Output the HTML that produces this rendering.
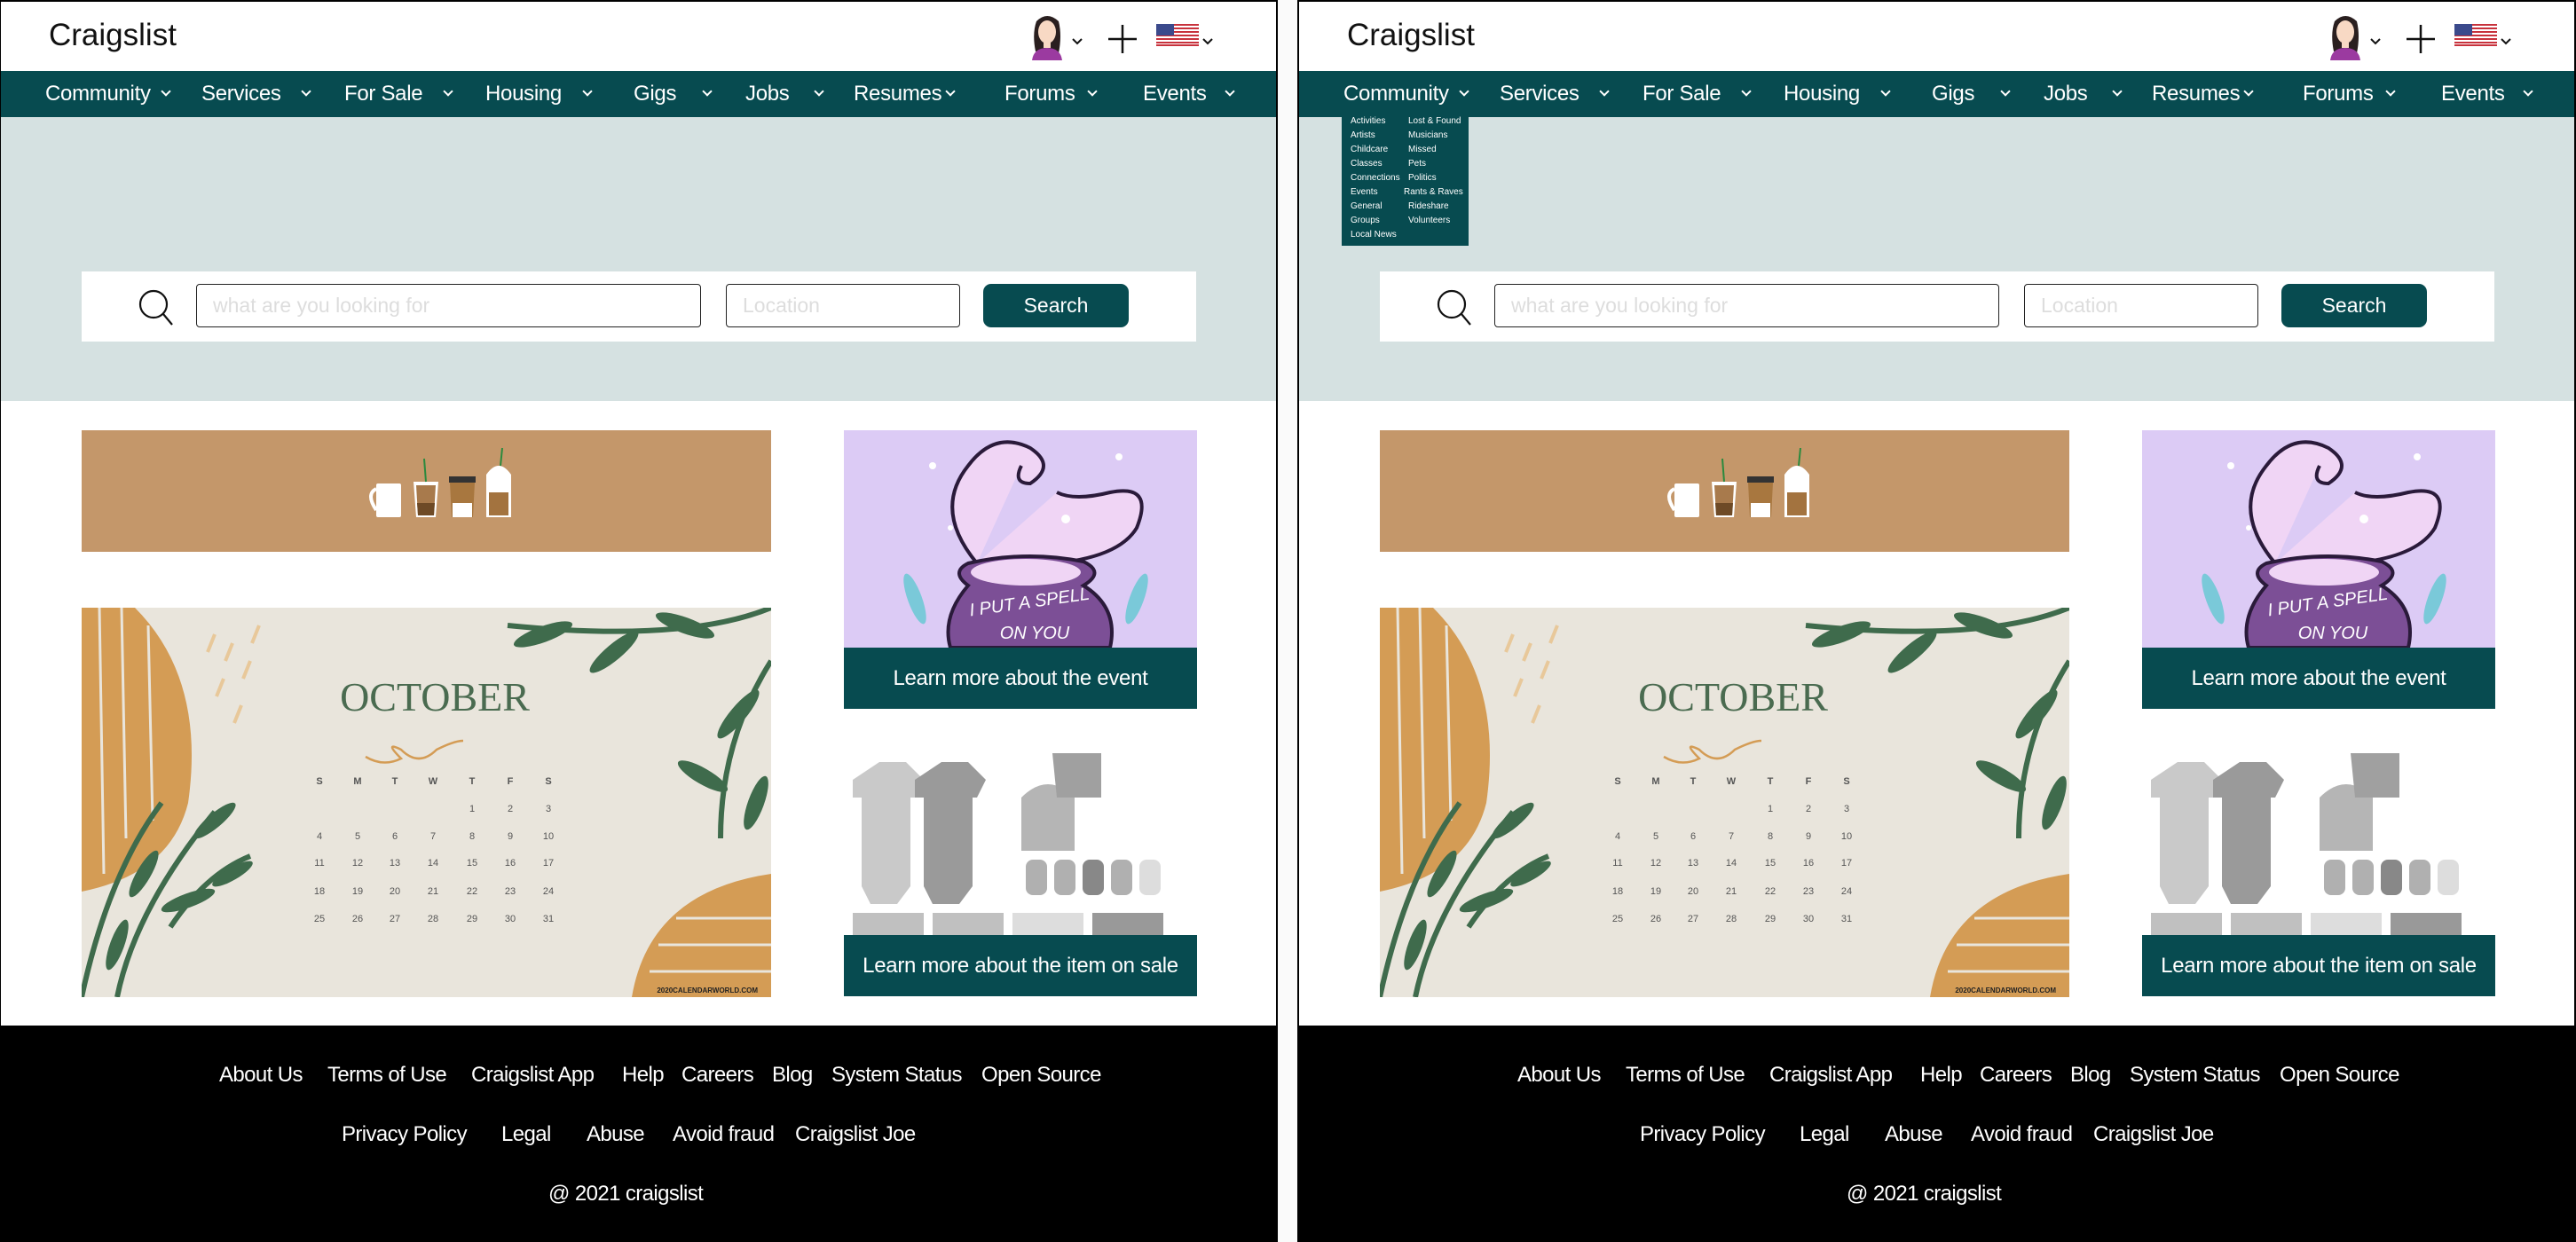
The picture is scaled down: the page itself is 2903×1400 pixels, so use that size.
<!DOCTYPE html>
<html><head><meta charset="utf-8"><style>
*{margin:0;padding:0;box-sizing:border-box}
body{width:2903px;height:1400px;background:#fafafa;position:relative;overflow:hidden;font-family:"Liberation Sans",sans-serif}
.f{position:absolute;top:0;width:1441px;height:1400px;border:2px solid #000;background:#fff;overflow:hidden}
.a{position:absolute}
.logo{left:54px;top:18px;font-size:35px;color:#111}
.nav{left:0;top:78px;width:100%;height:52px;background:#074b50}
.nav span{position:absolute;top:12px;color:#fff;font-size:24px;letter-spacing:-0.3px}
.chev{position:absolute;width:8px;height:8px;border-right:2px solid #fff;border-bottom:2px solid #fff;transform:rotate(45deg);top:19px}
.hero{left:0;top:130px;width:100%;height:320px;background:#d5e1e1}
.panel{left:91px;top:304px;width:1256px;height:79px;background:#fff}
.inp{position:absolute;border:1.5px solid #222;border-radius:4px;background:#fff;color:#ddd;font-size:23px;padding:10px 0 0 18px}
.btn{position:absolute;left:1016px;top:14px;width:164px;height:49px;background:#074b50;border-radius:9px;color:#fff;font-size:23px;text-align:center;line-height:49px}
.cap{position:absolute;left:950px;width:398px;height:69px;background:#074b50;color:#fff;font-size:24px;text-align:center;line-height:69px;letter-spacing:-0.3px}
.foot{left:0;top:1154px;width:100%;height:246px;background:#000}
.foot span{position:absolute;color:#fff;font-size:24px;letter-spacing:-0.6px}
.dd{left:48px;top:128px;width:143px;height:147px;background:#074b50}
.dd span{position:absolute;color:#fff;font-size:10px}
.cal span{position:absolute;font-size:11px;color:#555;width:20px;text-align:center}
</style></head><body>

<!-- LEFT FRAME -->
<div class="f" style="left:-1px">
<div class="a logo">Craigslist</div>
<svg class="a" style="left:1158px;top:12px" width="215" height="54" viewBox="0 0 215 54">
<path d="M8 44 Q4 24 9 10 Q21 -2 34 10 Q38 26 34 46 Z" fill="#2a1f1f"/>
<ellipse cx="21" cy="22" rx="10" ry="13" fill="#f8d9c4"/>
<rect x="17" y="32" width="8" height="8" fill="#f8d9c4"/>
<path d="M4 54 Q6 40 21 40 Q36 40 38 54Z" fill="#9b3aa0"/>
<path d="M50 30 l5 5 l5 -5" stroke="#111" stroke-width="2" fill="none"/>
<path d="M106 14 V46 M90 30 H122" stroke="#111" stroke-width="2.5"/>
<g><rect x="144" y="13" width="48" height="25" fill="#fff"/>
<rect x="144" y="13" width="48" height="2" fill="#c8323c"/><rect x="144" y="17" width="48" height="2" fill="#c8323c"/><rect x="144" y="21" width="48" height="2" fill="#c8323c"/><rect x="144" y="25" width="48" height="2" fill="#c8323c"/><rect x="144" y="29" width="48" height="2" fill="#c8323c"/><rect x="144" y="33" width="48" height="2" fill="#c8323c"/><rect x="144" y="36" width="48" height="2" fill="#c8323c"/>
<rect x="144" y="13" width="20" height="13" fill="#3b4a8c"/></g>
<path d="M197 30 l5 5 l5 -5" stroke="#111" stroke-width="2" fill="none"/>
</svg>
<div class="a nav">
<span style="left:50px">Community</span><i class="chev" style="left:182px"></i>
<span style="left:226px">Services</span><i class="chev" style="left:340px"></i>
<span style="left:387px">For Sale</span><i class="chev" style="left:500px"></i>
<span style="left:546px">Housing</span><i class="chev" style="left:657px"></i>
<span style="left:713px">Gigs</span><i class="chev" style="left:792px"></i>
<span style="left:839px">Jobs</span><i class="chev" style="left:918px"></i>
<span style="left:961px">Resumes</span><i class="chev" style="left:1066px"></i>
<span style="left:1131px">Forums</span><i class="chev" style="left:1226px"></i>
<span style="left:1287px">Events</span><i class="chev" style="left:1381px"></i>
</div>
<div class="a hero"></div>
<div class="a panel">
<svg style="position:absolute;left:62px;top:18px" width="46" height="46" viewBox="0 0 46 46"><circle cx="19" cy="19" r="15" stroke="#111" stroke-width="2.2" fill="none"/><path d="M30 30 L40 42" stroke="#111" stroke-width="2.2"/></svg>
<div class="inp" style="left:129px;top:14px;width:569px;height:49px">what are you looking for</div>
<div class="inp" style="left:726px;top:14px;width:264px;height:49px">Location</div>
<div class="btn">Search</div>
</div>
<!-- coffee -->
<div class="a" style="left:91px;top:483px;width:777px;height:137px;background:#c4976a">
<svg style="position:absolute;left:322px;top:20px" width="180" height="80" viewBox="0 0 180 80">
<rect x="10" y="40" width="28" height="38" rx="2" fill="#fff"/><path d="M10 46 Q-2 52 10 70" stroke="#fff" stroke-width="4" fill="none"/>
<path d="M52 38 h28 l-3 40 h-22z" fill="#fff"/><path d="M55 42 h22 l-2 34 h-18z" fill="#a87a4c"/><path d="M56 62 h20 l-1 14 h-18z" fill="#6e4a26"/><path d="M66 38 L64 12" stroke="#2b8a3e" stroke-width="2"/>
<rect x="92" y="32" width="30" height="7" fill="#333"/><path d="M93 39 h28 l-2 39 h-24z" fill="#a8773f"/><rect x="96" y="62" width="22" height="16" fill="#fff"/>
<path d="M134 30 Q148 10 162 30 v48 h-28z" fill="#fff"/><rect x="137" y="50" width="22" height="26" fill="#a3733f"/><path d="M150 20 L152 0" stroke="#2b8a3e" stroke-width="2"/>
</svg></div>
<!-- calendar -->
<div class="a" style="left:91px;top:683px;width:777px;height:439px;background:#e9e5dc;overflow:hidden">
<svg style="position:absolute;left:0;top:0" width="777" height="439" viewBox="0 0 777 439">
<path d="M0 0 H60 Q140 80 120 220 Q100 300 0 320Z" fill="#d49c55"/>
<path d="M20 0 L25 300 M45 0 L50 260 M75 20 L80 240" stroke="#e9e5dc" stroke-width="3"/>
<path d="M0 439 Q30 300 90 220 M40 439 Q60 340 150 230 M100 360 Q140 300 190 280" stroke="#3f6b4c" stroke-width="6" fill="none"/>
<g fill="#3f6b4c"><ellipse cx="150" cy="240" rx="30" ry="8" transform="rotate(-40 150 240)"/><ellipse cx="70" cy="300" rx="30" ry="8" transform="rotate(-60 70 300)"/><ellipse cx="120" cy="330" rx="32" ry="8" transform="rotate(-20 120 330)"/><ellipse cx="40" cy="380" rx="30" ry="8" transform="rotate(-70 40 380)"/><ellipse cx="170" cy="300" rx="26" ry="7" transform="rotate(-30 170 300)"/></g>
<path d="M777 0 Q680 40 480 20 M777 60 Q720 150 720 260" stroke="#3f6b4c" stroke-width="6" fill="none"/>
<g fill="#3f6b4c"><ellipse cx="520" cy="30" rx="35" ry="9" transform="rotate(-20 520 30)"/><ellipse cx="600" cy="50" rx="35" ry="9" transform="rotate(-40 600 50)"/><ellipse cx="680" cy="20" rx="35" ry="9" transform="rotate(20 680 20)"/><ellipse cx="740" cy="120" rx="35" ry="9" transform="rotate(-50 740 120)"/><ellipse cx="700" cy="190" rx="32" ry="9" transform="rotate(30 700 190)"/><ellipse cx="760" cy="220" rx="32" ry="9" transform="rotate(-70 760 220)"/></g>
<path d="M777 300 Q640 320 620 439 H777Z" fill="#d49c55"/>
<path d="M650 380 H777 M640 410 H777 M670 350 H777" stroke="#e9e5dc" stroke-width="3"/>
<g stroke="#e8c89a" stroke-width="4"><path d="M150 30 l-8 20 M170 40 l-8 20 M190 60 l-8 20 M160 80 l-8 20 M180 110 l-8 20 M200 20 l-8 20"/></g>
<path d="M320 168 Q340 180 360 170 Q340 150 360 160 Q380 180 400 160 Q420 150 430 150" stroke="#d49c55" stroke-width="2.5" fill="none"/>
<text x="398" y="116" font-family="Liberation Serif,serif" font-size="46" fill="#4a6b50" text-anchor="middle">OCTOBER</text>
<text x="762" y="434" font-size="8" font-weight="bold" fill="#222" text-anchor="end">2020CALENDARWORLD.COM</text>
</svg>
<div class="cal">
<span style="left:258px;top:190px;font-weight:bold">S</span><span style="left:301px;top:190px;font-weight:bold">M</span><span style="left:343px;top:190px;font-weight:bold">T</span><span style="left:386px;top:190px;font-weight:bold">W</span><span style="left:430px;top:190px;font-weight:bold">T</span><span style="left:473px;top:190px;font-weight:bold">F</span><span style="left:516px;top:190px;font-weight:bold">S</span>
<span style="left:430px;top:221px">1</span><span style="left:473px;top:221px">2</span><span style="left:516px;top:221px">3</span>
<span style="left:258px;top:252px">4</span><span style="left:301px;top:252px">5</span><span style="left:343px;top:252px">6</span><span style="left:386px;top:252px">7</span><span style="left:430px;top:252px">8</span><span style="left:473px;top:252px">9</span><span style="left:516px;top:252px">10</span>
<span style="left:258px;top:282px">11</span><span style="left:301px;top:282px">12</span><span style="left:343px;top:282px">13</span><span style="left:386px;top:282px">14</span><span style="left:430px;top:282px">15</span><span style="left:473px;top:282px">16</span><span style="left:516px;top:282px">17</span>
<span style="left:258px;top:314px">18</span><span style="left:301px;top:314px">19</span><span style="left:343px;top:314px">20</span><span style="left:386px;top:314px">21</span><span style="left:430px;top:314px">22</span><span style="left:473px;top:314px">23</span><span style="left:516px;top:314px">24</span>
<span style="left:258px;top:345px">25</span><span style="left:301px;top:345px">26</span><span style="left:343px;top:345px">27</span><span style="left:386px;top:345px">28</span><span style="left:430px;top:345px">29</span><span style="left:473px;top:345px">30</span><span style="left:516px;top:345px">31</span>
</div></div>
<!-- witch -->
<div class="a" style="left:950px;top:483px;width:398px;height:245px;background:#dccbf5;overflow:hidden">
<svg width="398" height="245" viewBox="0 0 398 245">
<path d="M150 150 Q100 90 140 40 Q170 0 210 20 Q240 40 210 60 Q190 60 200 40 M150 150 Q300 160 330 110 Q350 60 300 70 Q260 80 240 70" stroke="#2a1a3a" stroke-width="4" fill="#f0d5f5"/>
<path d="M140 150 Q120 160 140 175 Q110 210 120 245 H300 Q310 200 270 175 Q295 160 270 148 Q205 135 140 150Z" fill="#7c4f96" stroke="#2a1a3a" stroke-width="4"/>
<ellipse cx="205" cy="160" rx="62" ry="15" fill="#f0d5f5"/>
<text x="210" y="200" font-size="20" fill="#fff" font-style="italic" text-anchor="middle" transform="rotate(-8 210 200)">I PUT A SPELL</text>
<text x="215" y="235" font-size="20" fill="#fff" font-style="italic" text-anchor="middle">ON YOU</text>
<g fill="#7ac9d9"><ellipse cx="80" cy="190" rx="8" ry="30" transform="rotate(-20 80 190)"/><ellipse cx="330" cy="190" rx="8" ry="30" transform="rotate(20 330 190)"/></g>
<g fill="#fff"><circle cx="100" cy="40" r="4"/><circle cx="310" cy="30" r="4"/><circle cx="250" cy="100" r="5"/><circle cx="120" cy="110" r="3"/></g>
</svg></div>
<div class="cap" style="top:728px">Learn more about the event</div>
<!-- baby -->
<div class="a" style="left:950px;top:837px;width:398px;height:215px;background:#fff;overflow:hidden">
<svg width="398" height="215" viewBox="0 0 398 215">
<path d="M10 40 L40 20 H70 L90 40 L80 60 L75 60 V160 L60 180 H30 L20 160 V60 L10 60Z" fill="#c9c9c9"/>
<path d="M80 40 L110 20 H140 L160 40 L150 60 L145 60 V160 L130 180 H100 L90 160 V60 L80 60Z" fill="#9a9a9a"/>
<path d="M200 60 Q230 30 260 60 V120 H200Z" fill="#b5b5b5"/>
<path d="M235 10 H290 V60 H240Z" fill="#a0a0a0"/>
<g fill="#b0b0b0"><rect x="205" y="130" width="24" height="40" rx="8"/><rect x="237" y="130" width="24" height="40" rx="8"/><rect x="269" y="130" width="24" height="40" rx="8" fill="#888"/><rect x="301" y="130" width="24" height="40" rx="8"/><rect x="333" y="130" width="24" height="40" rx="8" fill="#ddd"/></g>
<g fill="#c0c0c0"><rect x="10" y="190" width="80" height="25"/><rect x="100" y="190" width="80" height="25"/><rect x="190" y="190" width="80" height="25" fill="#ddd"/><rect x="280" y="190" width="80" height="25" fill="#999"/></g>
</svg></div>
<div class="cap" style="top:1052px">Learn more about the item on sale</div>
<div class="a foot">
<span style="left:246px;top:42px">About Us</span><span style="left:368px;top:42px">Terms of Use</span><span style="left:530px;top:42px">Craigslist App</span><span style="left:700px;top:42px">Help</span><span style="left:767px;top:42px">Careers</span><span style="left:869px;top:42px">Blog</span><span style="left:936px;top:42px">System Status</span><span style="left:1105px;top:42px">Open Source</span>
<span style="left:384px;top:109px">Privacy Policy</span><span style="left:564px;top:109px">Legal</span><span style="left:660px;top:109px">Abuse</span><span style="left:757px;top:109px">Avoid fraud</span><span style="left:895px;top:109px">Craigslist Joe</span>
<span style="left:617px;top:176px">@ 2021 craigslist</span>
</div>
</div>

<!-- RIGHT FRAME -->
<div class="f" style="left:1462px">
<div class="a logo">Craigslist</div>
<svg class="a" style="left:1158px;top:12px" width="215" height="54" viewBox="0 0 215 54">
<path d="M8 44 Q4 24 9 10 Q21 -2 34 10 Q38 26 34 46 Z" fill="#2a1f1f"/>
<ellipse cx="21" cy="22" rx="10" ry="13" fill="#f8d9c4"/>
<rect x="17" y="32" width="8" height="8" fill="#f8d9c4"/>
<path d="M4 54 Q6 40 21 40 Q36 40 38 54Z" fill="#9b3aa0"/>
<path d="M50 30 l5 5 l5 -5" stroke="#111" stroke-width="2" fill="none"/>
<path d="M106 14 V46 M90 30 H122" stroke="#111" stroke-width="2.5"/>
<g><rect x="144" y="13" width="48" height="25" fill="#fff"/>
<rect x="144" y="13" width="48" height="2" fill="#c8323c"/><rect x="144" y="17" width="48" height="2" fill="#c8323c"/><rect x="144" y="21" width="48" height="2" fill="#c8323c"/><rect x="144" y="25" width="48" height="2" fill="#c8323c"/><rect x="144" y="29" width="48" height="2" fill="#c8323c"/><rect x="144" y="33" width="48" height="2" fill="#c8323c"/><rect x="144" y="36" width="48" height="2" fill="#c8323c"/>
<rect x="144" y="13" width="20" height="13" fill="#3b4a8c"/></g>
<path d="M197 30 l5 5 l5 -5" stroke="#111" stroke-width="2" fill="none"/>
</svg>
<div class="a nav">
<span style="left:50px">Community</span><i class="chev" style="left:182px"></i>
<span style="left:226px">Services</span><i class="chev" style="left:340px"></i>
<span style="left:387px">For Sale</span><i class="chev" style="left:500px"></i>
<span style="left:546px">Housing</span><i class="chev" style="left:657px"></i>
<span style="left:713px">Gigs</span><i class="chev" style="left:792px"></i>
<span style="left:839px">Jobs</span><i class="chev" style="left:918px"></i>
<span style="left:961px">Resumes</span><i class="chev" style="left:1066px"></i>
<span style="left:1131px">Forums</span><i class="chev" style="left:1226px"></i>
<span style="left:1287px">Events</span><i class="chev" style="left:1381px"></i>
</div>
<div class="a hero"></div>
<div class="a dd">
<span style="left:10px;top:1px">Activities</span><span style="left:75px;top:1px">Lost &amp; Found</span>
<span style="left:10px;top:17px">Artists</span><span style="left:75px;top:17px">Musicians</span>
<span style="left:10px;top:33px">Childcare</span><span style="left:75px;top:33px">Missed</span>
<span style="left:10px;top:49px">Classes</span><span style="left:75px;top:49px">Pets</span>
<span style="left:10px;top:65px">Connections</span><span style="left:75px;top:65px">Politics</span>
<span style="left:10px;top:81px">Events</span><span style="left:70px;top:81px">Rants &amp; Raves</span>
<span style="left:10px;top:97px">General</span><span style="left:75px;top:97px">Rideshare</span>
<span style="left:10px;top:113px">Groups</span><span style="left:75px;top:113px">Volunteers</span>
<span style="left:10px;top:129px">Local News</span>
</div>
<div class="a panel">
<svg style="position:absolute;left:62px;top:18px" width="46" height="46" viewBox="0 0 46 46"><circle cx="19" cy="19" r="15" stroke="#111" stroke-width="2.2" fill="none"/><path d="M30 30 L40 42" stroke="#111" stroke-width="2.2"/></svg>
<div class="inp" style="left:129px;top:14px;width:569px;height:49px">what are you looking for</div>
<div class="inp" style="left:726px;top:14px;width:264px;height:49px">Location</div>
<div class="btn">Search</div>
</div>
<div class="a" style="left:91px;top:483px;width:777px;height:137px;background:#c4976a">
<svg style="position:absolute;left:322px;top:20px" width="180" height="80" viewBox="0 0 180 80">
<rect x="10" y="40" width="28" height="38" rx="2" fill="#fff"/><path d="M10 46 Q-2 52 10 70" stroke="#fff" stroke-width="4" fill="none"/>
<path d="M52 38 h28 l-3 40 h-22z" fill="#fff"/><path d="M55 42 h22 l-2 34 h-18z" fill="#a87a4c"/><path d="M56 62 h20 l-1 14 h-18z" fill="#6e4a26"/><path d="M66 38 L64 12" stroke="#2b8a3e" stroke-width="2"/>
<rect x="92" y="32" width="30" height="7" fill="#333"/><path d="M93 39 h28 l-2 39 h-24z" fill="#a8773f"/><rect x="96" y="62" width="22" height="16" fill="#fff"/>
<path d="M134 30 Q148 10 162 30 v48 h-28z" fill="#fff"/><rect x="137" y="50" width="22" height="26" fill="#a3733f"/><path d="M150 20 L152 0" stroke="#2b8a3e" stroke-width="2"/>
</svg></div>
<div class="a" style="left:91px;top:683px;width:777px;height:439px;background:#e9e5dc;overflow:hidden">
<svg style="position:absolute;left:0;top:0" width="777" height="439" viewBox="0 0 777 439">
<path d="M0 0 H60 Q140 80 120 220 Q100 300 0 320Z" fill="#d49c55"/>
<path d="M20 0 L25 300 M45 0 L50 260 M75 20 L80 240" stroke="#e9e5dc" stroke-width="3"/>
<path d="M0 439 Q30 300 90 220 M40 439 Q60 340 150 230 M100 360 Q140 300 190 280" stroke="#3f6b4c" stroke-width="6" fill="none"/>
<g fill="#3f6b4c"><ellipse cx="150" cy="240" rx="30" ry="8" transform="rotate(-40 150 240)"/><ellipse cx="70" cy="300" rx="30" ry="8" transform="rotate(-60 70 300)"/><ellipse cx="120" cy="330" rx="32" ry="8" transform="rotate(-20 120 330)"/><ellipse cx="40" cy="380" rx="30" ry="8" transform="rotate(-70 40 380)"/><ellipse cx="170" cy="300" rx="26" ry="7" transform="rotate(-30 170 300)"/></g>
<path d="M777 0 Q680 40 480 20 M777 60 Q720 150 720 260" stroke="#3f6b4c" stroke-width="6" fill="none"/>
<g fill="#3f6b4c"><ellipse cx="520" cy="30" rx="35" ry="9" transform="rotate(-20 520 30)"/><ellipse cx="600" cy="50" rx="35" ry="9" transform="rotate(-40 600 50)"/><ellipse cx="680" cy="20" rx="35" ry="9" transform="rotate(20 680 20)"/><ellipse cx="740" cy="120" rx="35" ry="9" transform="rotate(-50 740 120)"/><ellipse cx="700" cy="190" rx="32" ry="9" transform="rotate(30 700 190)"/><ellipse cx="760" cy="220" rx="32" ry="9" transform="rotate(-70 760 220)"/></g>
<path d="M777 300 Q640 320 620 439 H777Z" fill="#d49c55"/>
<path d="M650 380 H777 M640 410 H777 M670 350 H777" stroke="#e9e5dc" stroke-width="3"/>
<g stroke="#e8c89a" stroke-width="4"><path d="M150 30 l-8 20 M170 40 l-8 20 M190 60 l-8 20 M160 80 l-8 20 M180 110 l-8 20 M200 20 l-8 20"/></g>
<path d="M320 168 Q340 180 360 170 Q340 150 360 160 Q380 180 400 160 Q420 150 430 150" stroke="#d49c55" stroke-width="2.5" fill="none"/>
<text x="398" y="116" font-family="Liberation Serif,serif" font-size="46" fill="#4a6b50" text-anchor="middle">OCTOBER</text>
<text x="762" y="434" font-size="8" font-weight="bold" fill="#222" text-anchor="end">2020CALENDARWORLD.COM</text>
</svg>
<div class="cal">
<span style="left:258px;top:190px;font-weight:bold">S</span><span style="left:301px;top:190px;font-weight:bold">M</span><span style="left:343px;top:190px;font-weight:bold">T</span><span style="left:386px;top:190px;font-weight:bold">W</span><span style="left:430px;top:190px;font-weight:bold">T</span><span style="left:473px;top:190px;font-weight:bold">F</span><span style="left:516px;top:190px;font-weight:bold">S</span>
<span style="left:430px;top:221px">1</span><span style="left:473px;top:221px">2</span><span style="left:516px;top:221px">3</span>
<span style="left:258px;top:252px">4</span><span style="left:301px;top:252px">5</span><span style="left:343px;top:252px">6</span><span style="left:386px;top:252px">7</span><span style="left:430px;top:252px">8</span><span style="left:473px;top:252px">9</span><span style="left:516px;top:252px">10</span>
<span style="left:258px;top:282px">11</span><span style="left:301px;top:282px">12</span><span style="left:343px;top:282px">13</span><span style="left:386px;top:282px">14</span><span style="left:430px;top:282px">15</span><span style="left:473px;top:282px">16</span><span style="left:516px;top:282px">17</span>
<span style="left:258px;top:314px">18</span><span style="left:301px;top:314px">19</span><span style="left:343px;top:314px">20</span><span style="left:386px;top:314px">21</span><span style="left:430px;top:314px">22</span><span style="left:473px;top:314px">23</span><span style="left:516px;top:314px">24</span>
<span style="left:258px;top:345px">25</span><span style="left:301px;top:345px">26</span><span style="left:343px;top:345px">27</span><span style="left:386px;top:345px">28</span><span style="left:430px;top:345px">29</span><span style="left:473px;top:345px">30</span><span style="left:516px;top:345px">31</span>
</div></div>
<div class="a" style="left:950px;top:483px;width:398px;height:245px;background:#dccbf5;overflow:hidden">
<svg width="398" height="245" viewBox="0 0 398 245">
<path d="M150 150 Q100 90 140 40 Q170 0 210 20 Q240 40 210 60 Q190 60 200 40 M150 150 Q300 160 330 110 Q350 60 300 70 Q260 80 240 70" stroke="#2a1a3a" stroke-width="4" fill="#f0d5f5"/>
<path d="M140 150 Q120 160 140 175 Q110 210 120 245 H300 Q310 200 270 175 Q295 160 270 148 Q205 135 140 150Z" fill="#7c4f96" stroke="#2a1a3a" stroke-width="4"/>
<ellipse cx="205" cy="160" rx="62" ry="15" fill="#f0d5f5"/>
<text x="210" y="200" font-size="20" fill="#fff" font-style="italic" text-anchor="middle" transform="rotate(-8 210 200)">I PUT A SPELL</text>
<text x="215" y="235" font-size="20" fill="#fff" font-style="italic" text-anchor="middle">ON YOU</text>
<g fill="#7ac9d9"><ellipse cx="80" cy="190" rx="8" ry="30" transform="rotate(-20 80 190)"/><ellipse cx="330" cy="190" rx="8" ry="30" transform="rotate(20 330 190)"/></g>
<g fill="#fff"><circle cx="100" cy="40" r="4"/><circle cx="310" cy="30" r="4"/><circle cx="250" cy="100" r="5"/><circle cx="120" cy="110" r="3"/></g>
</svg></div>
<div class="cap" style="top:728px">Learn more about the event</div>
<div class="a" style="left:950px;top:837px;width:398px;height:215px;background:#fff;overflow:hidden">
<svg width="398" height="215" viewBox="0 0 398 215">
<path d="M10 40 L40 20 H70 L90 40 L80 60 L75 60 V160 L60 180 H30 L20 160 V60 L10 60Z" fill="#c9c9c9"/>
<path d="M80 40 L110 20 H140 L160 40 L150 60 L145 60 V160 L130 180 H100 L90 160 V60 L80 60Z" fill="#9a9a9a"/>
<path d="M200 60 Q230 30 260 60 V120 H200Z" fill="#b5b5b5"/>
<path d="M235 10 H290 V60 H240Z" fill="#a0a0a0"/>
<g fill="#b0b0b0"><rect x="205" y="130" width="24" height="40" rx="8"/><rect x="237" y="130" width="24" height="40" rx="8"/><rect x="269" y="130" width="24" height="40" rx="8" fill="#888"/><rect x="301" y="130" width="24" height="40" rx="8"/><rect x="333" y="130" width="24" height="40" rx="8" fill="#ddd"/></g>
<g fill="#c0c0c0"><rect x="10" y="190" width="80" height="25"/><rect x="100" y="190" width="80" height="25"/><rect x="190" y="190" width="80" height="25" fill="#ddd"/><rect x="280" y="190" width="80" height="25" fill="#999"/></g>
</svg></div>
<div class="cap" style="top:1052px">Learn more about the item on sale</div>
<div class="a foot">
<span style="left:246px;top:42px">About Us</span><span style="left:368px;top:42px">Terms of Use</span><span style="left:530px;top:42px">Craigslist App</span><span style="left:700px;top:42px">Help</span><span style="left:767px;top:42px">Careers</span><span style="left:869px;top:42px">Blog</span><span style="left:936px;top:42px">System Status</span><span style="left:1105px;top:42px">Open Source</span>
<span style="left:384px;top:109px">Privacy Policy</span><span style="left:564px;top:109px">Legal</span><span style="left:660px;top:109px">Abuse</span><span style="left:757px;top:109px">Avoid fraud</span><span style="left:895px;top:109px">Craigslist Joe</span>
<span style="left:617px;top:176px">@ 2021 craigslist</span>
</div>
</div>
</body></html>
